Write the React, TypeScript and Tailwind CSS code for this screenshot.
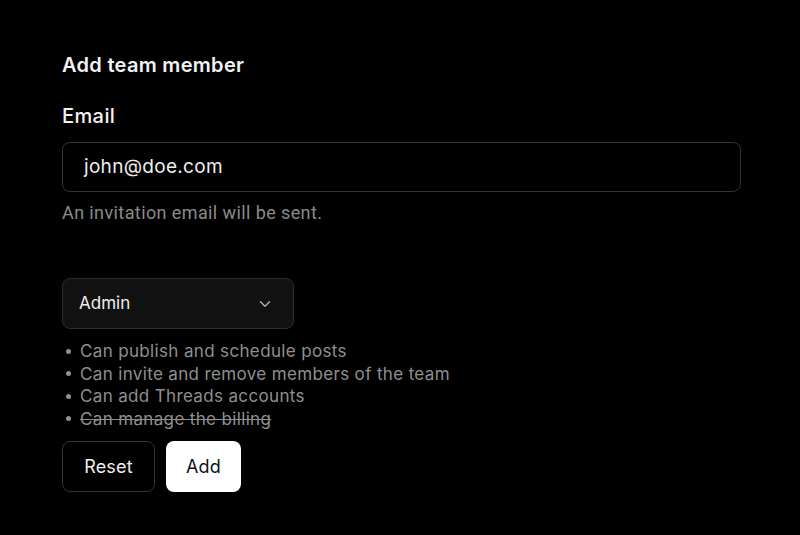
import { ChevronDown } from "lucide-react";

const perms = [
  { text: "Can publish and schedule posts", ok: true },
  { text: "Can invite and remove members of the team", ok: true },
  { text: "Can add Threads accounts", ok: true },
  { text: "Can manage the billing", ok: false },
];

export default function App() {
  return (
    <div
      className="h-[535px] w-[800px] bg-black text-white"
      style={{ fontFamily: "Inter, 'Noto Sans', sans-serif" }}
    >
      <div className="flex flex-col px-[62px] pt-[53px]">
        <h2 className="text-[20px] font-semibold leading-6 tracking-[0.3px] text-[#f2f2f2]">Add team member</h2>
        <label className="mt-[27px] text-[20px] font-medium leading-6 tracking-[0.4px] text-[#f2f2f2]">Email</label>
        <div className="mt-[14px] flex h-[50px] w-[679px] items-center rounded-[8px] border border-[#333] px-[21px]">
          <span className="text-[19px] tracking-[0.3px] text-[#eee]">john@doe.com</span>
        </div>
        <p
          className="mt-[11px] text-[18px] leading-5 tracking-[0.4px] text-[#8a8a8a]"
          style={{ fontFamily: "'Roboto', sans-serif" }}
        >
          An invitation email will be sent.
        </p>
        <button className="mt-[55px] flex h-[51px] w-[232px] items-center justify-between rounded-[8px] border border-[#2c2c2c] bg-[#111] pl-[16px] pr-[19px]">
          <span className="text-[17px] text-[#eee]">Admin</span>
          <ChevronDown size={18} strokeWidth={2} className="text-[#aaa]" />
        </button>
        <ul className="mt-[11px] flex flex-col">
          {perms.map((p) => (
            <li key={p.text} className="flex items-center text-[17px] leading-[22.5px] tracking-[0.35px] text-[#8f8f8f]">
              <span className="mr-[9px] ml-[4px] h-[5px] w-[5px] rounded-full bg-[#8f8f8f]" />
              <span className={p.ok ? "" : "line-through"}>{p.text}</span>
            </li>
          ))}
        </ul>
        <div className="mt-[11px] flex gap-[11px]">
          <button className="h-[51px] w-[93px] rounded-[8px] border border-[#333] text-[18px] tracking-[0.2px] text-[#eee]">
            Reset
          </button>
          <button className="h-[51px] w-[75px] rounded-[8px] bg-white text-[18px] tracking-[0.2px] text-[#111]">
            Add
          </button>
        </div>
      </div>
    </div>
  );
}
